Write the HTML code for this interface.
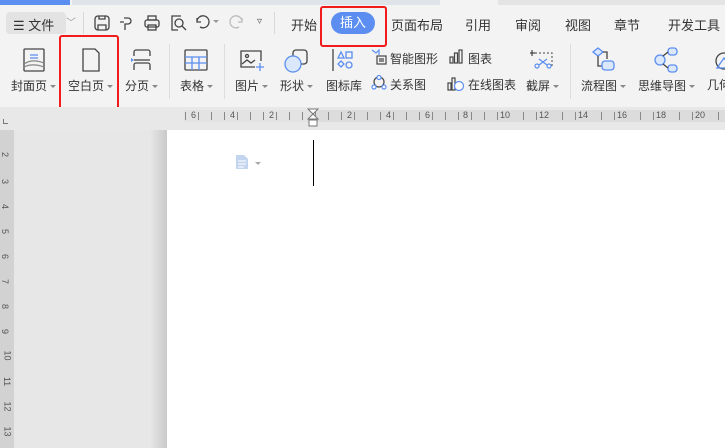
<!DOCTYPE html>
<html><head><meta charset="utf-8"><style>
*{margin:0;padding:0;box-sizing:border-box}
body{width:725px;height:448px;overflow:hidden;background:#f3f3f3;font-family:"Liberation Sans","Noto Sans CJK SC",sans-serif;position:relative;font-size:12px;color:#333}
.a{position:absolute;white-space:nowrap}
.t{font-size:12px;color:#333}
.dd::after{content:"";display:inline-block;margin-left:3px;vertical-align:middle;border-left:3px solid transparent;border-right:3px solid transparent;border-top:3px solid #888}
svg{position:absolute}
.red{position:absolute;border:2px solid #f21b1b;border-radius:3px}
</style></head><body>
<div class="a" style="left:0;top:0;width:70px;height:5px;background:#5b8ef0"></div>
<div class="a" style="left:72px;top:0;width:368px;height:5px;background:#dfe3ea"></div>
<div class="a" style="left:498px;top:0;width:227px;height:5px;background:#e4e4e4"></div>

<div class="a" style="left:6px;top:12px;width:60px;height:22px;background:#e3e3e3;border-radius:4px"></div>
<div class="a t" style="left:13px;top:15px;font-size:13px">☰ 文件</div>
<div class="a" style="left:66px;top:14px;color:#999;font-size:10px">﹀</div>
<div class="a" style="left:83px;top:12px;width:1px;height:22px;background:#d8d8d8"></div>
<svg style="left:93px;top:14px" width="18" height="18" viewBox="0 0 18 18" fill="none" stroke="#444" stroke-width="1.3"><rect x="2" y="2" width="14" height="14" rx="3"/><path d="M5 16v-5h8v5M6 2v3h6V2"/></svg>
<svg style="left:118px;top:14px" width="16" height="18" viewBox="0 0 16 18" fill="none" stroke="#444" stroke-width="1.3"><path d="M6 4h4a3 3 0 0 1 0 6H7v6M2 8h4"/></svg>
<svg style="left:143px;top:14px" width="18" height="18" viewBox="0 0 18 18" fill="none" stroke="#444" stroke-width="1.3"><rect x="5" y="2" width="8" height="4"/><rect x="2" y="6" width="14" height="7" rx="2"/><rect x="5" y="11" width="8" height="5"/></svg>
<svg style="left:169px;top:14px" width="18" height="18" viewBox="0 0 18 18" fill="none" stroke="#444" stroke-width="1.3"><path d="M12 2H3v14h6"/><circle cx="10" cy="9" r="4"/><path d="M13 12l4 4"/></svg>
<svg style="left:195px;top:15px" width="16" height="14" viewBox="0 0 16 14" fill="none" stroke="#444" stroke-width="1.3"><path d="M2 3v4h4M2 7a6 6 0 1 1 3 5"/></svg>
<div class="a" style="left:213px;top:20px;border-left:3px solid transparent;border-right:3px solid transparent;border-top:3px solid #999"></div>
<svg style="left:228px;top:15px" width="16" height="14" viewBox="0 0 16 14" fill="none" stroke="#bbb" stroke-width="1.3"><path d="M14 3v4h-4M14 7a6 6 0 1 0-3 5"/></svg>
<div class="a" style="left:257px;top:16px;color:#555;font-size:10px">▿</div>
<div class="a" style="left:274px;top:12px;width:1px;height:22px;background:#d8d8d8"></div>
<div class="a t" style="left:291px;top:15px;font-size:13px">开始</div>
<div class="a" style="left:331px;top:12px;width:44px;height:22px;background:#5b8ef0;border-radius:11px;color:#fff;font-size:13px;text-align:center;line-height:22px">插入</div>
<div class="red" style="left:320px;top:6px;width:67px;height:41px"></div>
<div class="a t" style="left:391px;top:15px;font-size:13px">页面布局</div>
<div class="a t" style="left:465px;top:15px;font-size:13px">引用</div>
<div class="a t" style="left:515px;top:15px;font-size:13px">审阅</div>
<div class="a t" style="left:565px;top:15px;font-size:13px">视图</div>
<div class="a t" style="left:614px;top:15px;font-size:13px">章节</div>
<div class="a t" style="left:668px;top:15px;font-size:13px">开发工具</div>

<svg style="left:23px;top:48px" width="22" height="24" viewBox="0 0 22 24" fill="none" stroke="#444" stroke-width="1.3"><rect x="1" y="1" width="20" height="22" rx="1"/><path d="M7 7h8M7 10h8" stroke="#5b8ef0"/><path d="M1 16c6-4 12-4 20-1M1 19c6-3 12-3 20 0" stroke="#888"/></svg>
<div class="a t dd" style="left:11px;top:77px">封面页</div>
<svg style="left:81px;top:48px" width="20" height="24" viewBox="0 0 20 24" fill="none" stroke="#444" stroke-width="1.3"><path d="M2 1h12l4 4v18H2z"/></svg>
<div class="a t dd" style="left:68px;top:77px">空白页</div>
<div class="red" style="left:59px;top:35px;width:60px;height:79px"></div>
<svg style="left:129px;top:48px" width="24" height="24" viewBox="0 0 24 24" fill="none" stroke="#444" stroke-width="1.3"><path d="M5 8V4a2 2 0 0 1 2-2h12a2 2 0 0 1 2 2v4M5 22v-5a2 2 0 0 1 2-2h12a2 2 0 0 1 2 2v5"/><path d="M2 10l3 2-3 2z" fill="#5b8ef0" stroke="none"/><path d="M5 12h16"/></svg>
<div class="a t dd" style="left:125px;top:77px">分页</div>
<div class="a" style="left:169px;top:44px;width:1px;height:55px;background:#ddd"></div>
<svg style="left:184px;top:49px" width="24" height="22" viewBox="0 0 24 22" fill="none" stroke="#444" stroke-width="1.3"><rect x="1" y="1" width="22" height="20" rx="1"/><path d="M1 8h22M1 14h22M8 8v13M15 8v13" stroke="#5b8ef0"/></svg>
<div class="a t dd" style="left:180px;top:77px">表格</div>
<div class="a" style="left:224px;top:44px;width:1px;height:55px;background:#ddd"></div>
<svg style="left:239px;top:49px" width="26" height="24" viewBox="0 0 26 24" fill="none" stroke="#444" stroke-width="1.3"><path d="M16 18H2V2h20v10"/><circle cx="8" cy="7" r="1.5"/><path d="M3 15l5-4 4 3 4-3"/><path d="M21 14v8M17 18h8" stroke="#5b8ef0"/></svg>
<div class="a t dd" style="left:235px;top:77px">图片</div>
<svg style="left:283px;top:48px" width="26" height="26" viewBox="0 0 26 26"><rect x="10" y="2" width="14" height="14" rx="3" fill="none" stroke="#444" stroke-width="1.3"/><circle cx="10" cy="16" r="8" fill="#dbe7fb" stroke="#5b8ef0" stroke-width="1.3"/></svg>
<div class="a t dd" style="left:280px;top:77px">形状</div>
<svg style="left:332px;top:48px" width="22" height="24" viewBox="0 0 22 24" fill="none" stroke="#5b8ef0" stroke-width="1.3"><path d="M1 1v22" stroke="#444"/><path d="M6 10l3-6 3 6z"/><rect x="14" y="4" width="6" height="6"/><path d="M9 13l3 3-3 3-3-3z"/><circle cx="17" cy="17" r="3"/></svg>
<div class="a t" style="left:326px;top:77px">图标库</div>
<svg style="left:371px;top:49px" width="16" height="16" viewBox="0 0 16 16" fill="none" stroke="#444" stroke-width="1.2"><path d="M1 1l4 3 3-3v5" stroke="#5b8ef0"/><rect x="6" y="7" width="9" height="8"/><path d="M8 10h5M8 12h5"/></svg>
<div class="a t" style="left:390px;top:50px">智能图形</div>
<svg style="left:449px;top:49px" width="14" height="15" viewBox="0 0 14 15" fill="none" stroke="#444" stroke-width="1.2"><rect x="1" y="8" width="3" height="6"/><rect x="5.5" y="4" width="3" height="10"/><rect x="10" y="1" width="3" height="13"/></svg>
<div class="a t" style="left:468px;top:50px">图表</div>
<svg style="left:371px;top:75px" width="16" height="16" viewBox="0 0 16 16" fill="none" stroke="#444" stroke-width="1.2"><circle cx="8" cy="7" r="5"/><circle cx="8" cy="2.5" r="2" fill="#fff" stroke="#5b8ef0"/><circle cx="3" cy="12" r="2" fill="#fff" stroke="#5b8ef0"/><circle cx="13" cy="12" r="2" fill="#fff" stroke="#5b8ef0"/></svg>
<div class="a t" style="left:390px;top:76px">关系图</div>
<svg style="left:447px;top:75px" width="18" height="16" viewBox="0 0 18 16" fill="none" stroke="#444" stroke-width="1.2"><rect x="1" y="8" width="3" height="7"/><rect x="5" y="3" width="3" height="12"/><circle cx="12" cy="11" r="4.5" fill="#fff" stroke="#5b8ef0"/></svg>
<div class="a t" style="left:468px;top:76px">在线图表</div>
<svg style="left:530px;top:49px" width="24" height="22" viewBox="0 0 24 22" fill="none" stroke="#666" stroke-width="1.2"><path d="M5 4h17v13" stroke-dasharray="2 2"/><path d="M2 1v6M-1 4h6" stroke="#444"/><circle cx="7" cy="17" r="2" stroke="#5b8ef0"/><circle cx="19" cy="17" r="2" stroke="#5b8ef0"/><path d="M9 16l8-6M17 16l-8-6" stroke="#5b8ef0"/></svg>
<div class="a t dd" style="left:526px;top:77px">截屏</div>
<div class="a" style="left:570px;top:44px;width:1px;height:55px;background:#ddd"></div>
<svg style="left:590px;top:47px" width="26" height="26" viewBox="0 0 26 26" fill="none" stroke="#444" stroke-width="1.3"><path d="M8 1l5 4-5 4-5-4z" fill="#dbe7fb" stroke="#5b8ef0"/><path d="M8 9v10h4"/><rect x="12" y="14" width="12" height="9" rx="3" fill="#dbe7fb" stroke="#5b8ef0"/><path d="M13 5h4v7"/></svg>
<div class="a t dd" style="left:581px;top:77px">流程图</div>
<svg style="left:653px;top:47px" width="26" height="26" viewBox="0 0 26 26" fill="none" stroke="#5b8ef0" stroke-width="1.3"><circle cx="7" cy="13" r="5" fill="#dbe7fb"/><rect x="15" y="1" width="9" height="7" rx="3" fill="#dbe7fb"/><rect x="15" y="18" width="9" height="7" rx="3" fill="#dbe7fb"/><path d="M10 9l5-4M10 17l5 4" stroke="#444"/></svg>
<div class="a t dd" style="left:638px;top:77px">思维导图</div>
<svg style="left:714px;top:48px" width="14" height="26" viewBox="0 0 14 26" fill="none" stroke="#444" stroke-width="1.3"><circle cx="10" cy="13" r="8"/><path d="M3 20l7-10 7 10z" stroke="#5b8ef0"/></svg>
<div class="a t" style="left:707px;top:76px">几何</div>

<div class="a" style="left:0;top:107px;width:725px;height:23px;background:#e8e8e8"></div>
<div class="a" style="left:3px;top:119px;width:5px;height:5px;border-left:1px solid #777;border-bottom:1px solid #777"></div>
<div class="a" style="left:184px;top:110px;width:131px;height:12px;background:#e3e3e3"></div>
<div class="a" style="left:315px;top:110px;width:410px;height:12px;background:#dcdcdc"></div>
<div class="a" style="left:185px;top:112px;width:540px;height:8px;background:repeating-linear-gradient(90deg,#888 0,#888 1px,transparent 1px,transparent 13px)"></div>
<div class="a" style="left:165px;top:110px;font-size:9px;color:#555;letter-spacing:0">
<span style="position:absolute;left:24px;background:#e3e3e3;padding:0 2px">6</span><span style="position:absolute;left:63px;background:#e3e3e3;padding:0 2px">4</span><span style="position:absolute;left:102px;background:#e3e3e3;padding:0 2px">2</span><span style="position:absolute;left:180px;background:#dcdcdc;padding:0 2px">2</span><span style="position:absolute;left:219px;background:#dcdcdc;padding:0 2px">4</span><span style="position:absolute;left:258px;background:#dcdcdc;padding:0 2px">6</span><span style="position:absolute;left:296px;background:#dcdcdc;padding:0 2px">8</span><span style="position:absolute;left:333px;background:#dcdcdc;padding:0 2px">10</span><span style="position:absolute;left:372px;background:#dcdcdc;padding:0 2px">12</span><span style="position:absolute;left:411px;background:#dcdcdc;padding:0 2px">14</span><span style="position:absolute;left:450px;background:#dcdcdc;padding:0 2px">16</span><span style="position:absolute;left:489px;background:#dcdcdc;padding:0 2px">18</span><span style="position:absolute;left:528px;background:#dcdcdc;padding:0 2px">20</span></div>
<svg style="left:305px;top:108px" width="16" height="20" viewBox="0 0 16 20" fill="#fff" stroke="#777"><path d="M3 1h10L8 6z M8 6l-5 5h10z"/><rect x="4" y="12" width="8" height="6"/></svg>

<div class="a" style="left:0;top:130px;width:14px;height:318px;background:#d2d2d2"></div>
<div class="a" style="left:14px;top:130px;width:136px;height:318px;background:#e7e7e7"></div>
<div class="a" style="left:150px;top:130px;width:17px;height:318px;background:linear-gradient(90deg,#e7e7e7,#c9c9c9)"></div>
<div class="a" style="left:167px;top:130px;width:558px;height:318px;background:#fff"></div>
<div class="a" style="left:2px;top:150px;font-size:9px;color:#555;line-height:1">
<div style="position:absolute;top:0;transform:rotate(90deg)">2</div><div style="position:absolute;top:27px;transform:rotate(90deg)">3</div><div style="position:absolute;top:52px;transform:rotate(90deg)">4</div><div style="position:absolute;top:77px;transform:rotate(90deg)">5</div><div style="position:absolute;top:102px;transform:rotate(90deg)">6</div><div style="position:absolute;top:127px;transform:rotate(90deg)">7</div><div style="position:absolute;top:152px;transform:rotate(90deg)">8</div><div style="position:absolute;top:177px;transform:rotate(90deg)">9</div><div style="position:absolute;top:201px;transform:rotate(90deg)">10</div><div style="position:absolute;top:227px;transform:rotate(90deg)">11</div><div style="position:absolute;top:252px;transform:rotate(90deg)">12</div><div style="position:absolute;top:277px;transform:rotate(90deg)">13</div></div>

<svg style="left:235px;top:154px" width="14" height="16" viewBox="0 0 14 16"><path d="M1 1h8l4 4v10H1z" fill="#c3d4ef"/><path d="M3 7h8M3 10h8M3 13h6" stroke="#fff"/></svg>
<div class="a" style="left:255px;top:162px;border-left:3px solid transparent;border-right:3px solid transparent;border-top:3px solid #aaa"></div>
<div class="a" style="left:313px;top:140px;width:1px;height:46px;background:#000"></div>
</body></html>
